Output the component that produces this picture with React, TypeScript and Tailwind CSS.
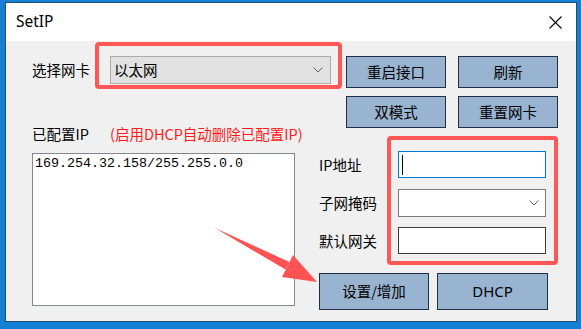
import React from "react";

const ui = { fontFamily: '"Segoe UI", "Noto Sans", "Noto Sans CJK SC", sans-serif' };
const cjk = { fontFamily: '"Noto Sans CJK SC", "Noto Sans", sans-serif' };
const mono = { fontFamily: '"Liberation Mono", "DejaVu Sans Mono", monospace' };

function Chevron() {
  return (
    <svg width="10" height="6" viewBox="0 0 10 6" className="block">
      <path d="M0.5 0.5 L5 5 L9.5 0.5" fill="none" stroke="#606060" strokeWidth="1" />
    </svg>
  );
}

function Btn({ children, w, h }: { children: React.ReactNode; w: string; h: string }) {
  return (
    <div
      className={`${w} ${h} flex items-center justify-center bg-[#99b4d1] border border-[#1e2d44] text-[14.5px] text-black leading-none`}
      style={cjk}
    >
      {children}
    </div>
  );
}

export default function App() {
  return (
    <div className="relative w-[581px] h-[329px] overflow-hidden bg-[#1380d4] pl-[5px] pt-[2px]">
      <div className="w-[572px] h-[320px] border border-[#2a4a6e] bg-[#f0f0f0] flex flex-col">
        {/* title bar */}
        <div className="h-[38px] bg-white flex items-center justify-between pl-[10px] pr-[14px] shrink-0">
          <span className="text-[15.5px] text-black" style={ui}>SetIP</span>
          <svg width="13" height="13" viewBox="0 0 13 13" className="block">
            <path d="M0.5 0.5 L12.5 12.5 M12.5 0.5 L0.5 12.5" stroke="#000" strokeWidth="1.1" />
          </svg>
        </div>
        {/* content */}
        <div className="flex flex-col text-black" style={cjk}>
          {/* row 1 */}
          <div className="flex items-start mt-[15px]">
            <div className="ml-[26px] w-[78px] h-[28px] flex items-center text-[14.5px]">选择网卡</div>
            <div className="w-[221px] h-[28px] bg-[#e1e1e1] border border-[#adadad] flex items-center justify-between pl-[3px] pr-[7px] text-[14.5px]">
              <span>以太网</span>
              <Chevron />
            </div>
            <div className="ml-[15px]">
              <Btn w="w-[100px]" h="h-[32px]">重启接口</Btn>
            </div>
            <div className="ml-[12px]">
              <Btn w="w-[100px]" h="h-[32px]">刷新</Btn>
            </div>
          </div>
          {/* row 2 */}
          <div className="flex items-start mt-[8px] ml-[340px]">
            <Btn w="w-[100px]" h="h-[32px]">双模式</Btn>
            <div className="ml-[12px]">
              <Btn w="w-[100px]" h="h-[32px]">重置网卡</Btn>
            </div>
          </div>
          {/* label row */}
          <div className="flex items-center h-[20px] -mt-[4px] ml-[26px] text-[14.5px] leading-[20px]">
            <span className="w-[78px]">已配置IP</span>
            <span className="text-[#ff1a1a]">(启用DHCP自动删除已配置IP)</span>
          </div>
          {/* body */}
          <div className="flex items-start">
            <div className="ml-[26px] mt-[9px] w-[263px] h-[153px] bg-white border border-[#828790] pl-[2px] pt-[2px]">
              <div className="text-[13.33px] leading-[16px]" style={mono}>169.254.32.158/255.255.0.0</div>
            </div>
            <div className="ml-[24px] mt-[7px] flex flex-col">
              <div className="flex items-center h-[27px]">
                <span className="w-[79px] text-[14.5px]">IP地址</span>
                <div className="w-[148px] h-[27px] bg-white border border-[#0078d7] flex items-center pl-[3px]">
                  <div className="w-px h-[20px] bg-black" />
                </div>
              </div>
              <div className="flex items-center h-[28px] mt-[11px]">
                <span className="w-[79px] text-[14.5px]">子网掩码</span>
                <div className="w-[148px] h-[28px] bg-white border border-[#7a7a7a] flex items-center justify-end pr-[6px]">
                  <Chevron />
                </div>
              </div>
              <div className="flex items-center h-[27px] mt-[10px]">
                <span className="w-[79px] text-[14.5px]">默认网关</span>
                <div className="w-[148px] h-[27px] bg-white border border-[#3c3c3c]" />
              </div>
              <div className="flex mt-[19px]">
                <Btn w="w-[110px]" h="h-[37px]">设置/增加</Btn>
                <div className="ml-[8px]">
                  <Btn w="w-[111px]" h="h-[37px]">
                    <span style={ui} className="text-[15px]">DHCP</span>
                  </Btn>
                </div>
              </div>
            </div>
          </div>
        </div>
      </div>

      {/* red highlight boxes */}
      <div className="absolute left-[95px] top-[42px] w-[247px] h-[47px] border-[4px] border-[#ff5656] rounded-[4px]" />
      <div className="absolute left-[387px] top-[136px] w-[171px] h-[129px] border-[4px] border-[#ff5656] rounded-[4px]" />

      {/* arrow */}
      <svg className="absolute left-0 top-0 pointer-events-none" width="581" height="329" viewBox="0 0 581 329">
        <polygon points="215,228 289.5,262 285.5,269.5" fill="#ff5252" />
        <polygon points="282,277 293,255 317,282" fill="#ff5252" />
      </svg>
    </div>
  );
}
